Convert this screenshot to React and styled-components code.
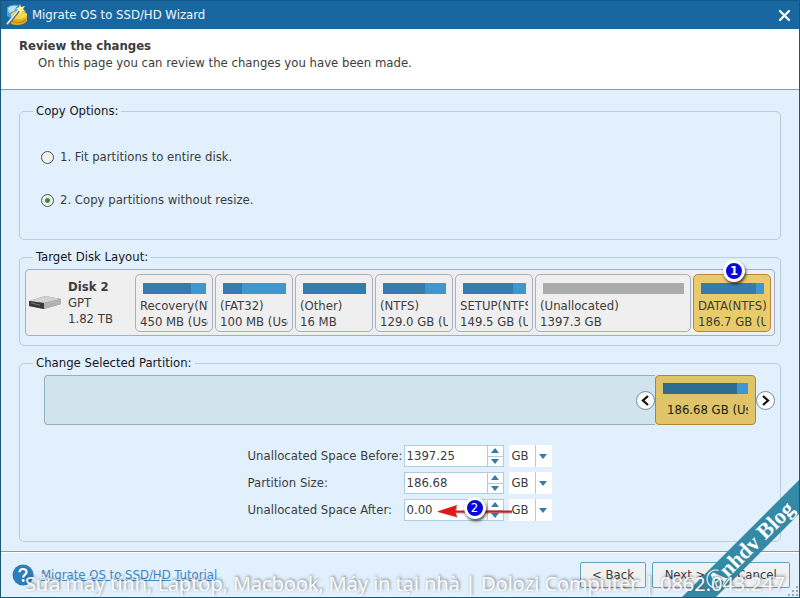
import { useState } from "react";
import styled, { createGlobalStyle } from "styled-components";

const GlobalStyle = createGlobalStyle`
  * {
    box-sizing: border-box;
  }

  body {
    margin: 0;
    background: #e2f0fd;
    color: #3c3c3c;
    font-family: Tahoma, "DejaVu Sans Condensed", "Noto Sans", sans-serif;
    font-size: 13px;
    line-height: 16px;
  }

  button, input, select {
    font: inherit;
    color: inherit;
    margin: 0;
  }
`;

const Window = styled.div`
  position: relative;
  display: flex;
  flex-direction: column;
  min-height: 100vh;
  border: 1px solid #1b5678;
  border-top-color: #135787;
  overflow: hidden;
`;

const TitleBar = styled.div`
  display: flex;
  align-items: center;
  gap: 4px;
  height: 28px;
  padding: 0 8px 0 5px;
  background: #1967a0;
  color: #f2f8fc;
`;

const TitleText = styled.span`
  flex: 1;
`;

const CloseButton = styled.button`
  display: flex;
  padding: 0;
  border: none;
  background: none;
`;

const Header = styled.header`
  height: 61px;
  padding: 9px 18px 0;
  background: #fff;
  border-bottom: 1px solid #8a9bb2;
`;

const HeaderTitle = styled.h1`
  margin: 0;
  font-size: 13px;
  line-height: 16px;
`;

const HeaderText = styled.p`
  margin: 0;
  padding: 1px 0 0 19px;
`;

const Body = styled.main`
  flex: 1;
  display: flex;
  flex-direction: column;
  gap: 9px;
  padding: 13px 18px 9px;
`;

const Group = styled.fieldset`
  min-width: 0;
  margin: 0;
  padding: ${({ $padding }) => $padding};
  border: 1px solid #b9cddb;
  border-radius: 5px;
`;

const Legend = styled.legend`
  margin-left: 8px;
  padding: 0 3px;
  color: #141422;
`;

const Options = styled.div`
  display: flex;
  flex-direction: column;
  align-items: flex-start;
  gap: 23px;
  padding: 28px 16px 29px;
`;

const Option = styled.label`
  display: flex;
  align-items: center;
  gap: 6px;
  height: 20px;
`;

const Radio = styled.input`
  appearance: none;
  width: 13px;
  height: 13px;
  border: 1px solid #4b5358;
  border-radius: 50%;
  background: #f1f1ec;

  &:checked {
    background: radial-gradient(circle, #2f9433 0 2px, #f1f1ec 3px);
  }
`;

const DiskPanel = styled.div`
  display: flex;
  align-items: center;
  height: 67px;
  padding: 0 3px;
  border: 1px solid #9fafc8;
  border-radius: 4px;
  background: #efefef;
`;

const DiskInfo = styled.div`
  display: flex;
  align-items: center;
  gap: 6px;
  width: 106px;
`;

const DiskText = styled.div`
  display: flex;
  flex-direction: column;
`;

const Partitions = styled.div`
  flex: 1;
  min-width: 0;
  display: grid;
  grid-template-columns: repeat(5, 1fr) 2fr 1fr;
  gap: 2px;
`;

const PartitionBox = styled.button`
  position: relative;
  min-width: 0;
  height: 58px;
  padding: 7px 4px 0;
  border: 1px solid ${({ $selected }) => ($selected ? "#b7863a" : "#a3b0c6")};
  border-radius: 5px;
  background: ${({ $selected }) => ($selected ? "#eacb6c" : "#efefef")};
  text-align: left;
`;

const UsageBar = styled.span`
  display: block;
  height: 11px;
  margin: ${({ $margin }) => $margin};
  background: ${({ $free }) => ($free ? "#ababab" : "#3d97d1")};
`;

const Used = styled.span`
  display: block;
  height: 100%;
  background: ${({ $dark }) => ($dark ? "#2c6c93" : "#347cab")};
`;

const PartitionText = styled.span`
  display: block;
  overflow: hidden;
  white-space: nowrap;
`;

const Badge = styled.span`
  position: absolute;
  top: ${({ $top }) => $top};
  left: ${({ $left }) => $left};
  display: flex;
  align-items: center;
  justify-content: center;
  width: 22px;
  height: 22px;
  border: 3px solid #fff;
  border-radius: 50%;
  background: #0808d8;
  box-shadow: 1px 2px 3px rgba(0, 0, 0, 0.7);
  color: #fff;
  font-size: 13px;
  font-weight: ${({ $bold }) => ($bold ? 700 : 400)};
`;

const Resizer = styled.div`
  display: flex;
  align-items: center;
  margin-left: 19px;
`;

const Track = styled.div`
  flex: 1;
  display: flex;
  align-items: center;
  justify-content: flex-end;
  height: 50px;
  border: 1px solid #98aebc;
  border-right: none;
  border-radius: 4px 0 0 4px;
  background: #d1e4ee;
`;

const ResizeBox = styled.div`
  width: 101px;
  height: 50px;
  padding: 7px;
  border: 1px solid #b58432;
  border-radius: 4px;
  background: #dfc469;
  color: #1e1a10;
`;

const SizeText = styled.span`
  display: block;
  margin-top: 8px;
  padding-left: 4px;
  overflow: hidden;
  white-space: nowrap;
`;

const ArrowButton = styled.button`
  display: flex;
  align-items: center;
  justify-content: center;
  width: 19px;
  height: 19px;
  padding: 0;
  border: 1px solid #6890b0;
  border-radius: 50%;
  background: #fff;
`;

const Form = styled.div`
  display: flex;
  flex-direction: column;
  align-items: center;
  gap: 5px;
  padding: 20px 0;
`;

const FormRow = styled.div`
  position: relative;
  display: grid;
  grid-template-columns: 156px 149px;
  align-items: center;
  height: 22px;
  white-space: nowrap;
`;

const Fields = styled.div`
  display: flex;
  gap: 5px;
`;

const Spin = styled.div`
  display: flex;
  width: 100px;
  height: 22px;
  border: 1px solid #abcfdf;
  background: #fff;
`;

const SpinInput = styled.input`
  flex: 1;
  min-width: 0;
  padding: 0 2px;
  border: none;
  outline: none;
  background: none;
`;

const SpinButtons = styled.div`
  display: flex;
  flex-direction: column;
  width: 16px;
  border-left: 1px solid #abcfdf;
`;

const SpinButton = styled.button`
  flex: 1;
  display: flex;
  align-items: center;
  justify-content: center;
  padding: 0;
  border: none;
  background: none;

  & + & {
    border-top: 1px solid #abcfdf;
  }
`;

const Unit = styled.div`
  display: grid;
  grid-template-columns: 26px 17px;
  align-items: center;
  height: 22px;
  background: #fff;

  svg {
    grid-area: 1 / 2;
    justify-self: center;
    pointer-events: none;
  }
`;

const UnitSelect = styled.select`
  appearance: none;
  grid-area: 1 / 1 / 2 / 3;
  height: 22px;
  padding: 0 0 0 3px;
  border: none;
  border-radius: 0;
  outline: none;
  background: linear-gradient(#abcfdf, #abcfdf) 26px 0 / 1px 100% no-repeat;
`;

const Annotation = styled.div`
  position: absolute;
  top: 0;
  left: 188px;
  pointer-events: none;
`;

const Footer = styled.footer`
  display: flex;
  align-items: center;
  gap: 6px;
  height: 46px;
  padding: 0 9px 0 11px;
  border-top: 1px solid #8899a6;
  box-shadow: inset 0 1px #fff;
`;

const Help = styled.div`
  flex: 1;
  display: flex;
  align-items: center;
  gap: 7px;
`;

const HelpLink = styled.a`
  color: #3f85c2;
`;

const FooterButton = styled.button`
  width: 66px;
  height: 26px;
  padding: 0;
  border: 1px solid #5fa3bd;
  border-radius: 2px;
  background: #eff1f3;
`;

const Grip = styled.svg`
  position: absolute;
  right: 1px;
  bottom: 1px;
`;

const RibbonCorner = styled.div`
  position: absolute;
  right: -1px;
  bottom: -1px;
  width: 120px;
  height: 120px;
  overflow: hidden;
  pointer-events: none;
`;

const Ribbon = styled.div`
  position: absolute;
  top: 57px;
  left: -31px;
  display: flex;
  align-items: center;
  justify-content: center;
  width: 200px;
  height: 24px;
  padding-left: 6px;
  background: #3489a6;
  color: #fff;
  font: bold 22px/22px "Liberation Serif", serif;
  transform: rotate(-45deg);

  svg {
    position: absolute;
    left: 43px;
  }
`;

const Watermark = styled.div`
  position: absolute;
  left: 24px;
  bottom: 0;
  color: #fff;
  font: 20px/26px "Open Sans", "Noto Sans", sans-serif;
  text-shadow: 1px -1px 3px rgba(60, 70, 80, 0.7);
  white-space: nowrap;
  pointer-events: none;
`;

const partitions = [
  { name: "Recovery(NTFS)", size: "450 MB (Used: 344 MB)", used: 76 },
  { name: "(FAT32)", size: "100 MB (Used: 30 MB)", used: 30 },
  { name: "(Other)", size: "16 MB", used: 100 },
  { name: "(NTFS)", size: "129.0 GB (Used: 86 GB)", used: 67 },
  { name: "SETUP(NTFS)", size: "149.5 GB (Used: 118 GB)", used: 79 },
  { name: "(Unallocated)", size: "1397.3 GB", free: true },
  { name: "DATA(NTFS)", size: "186.7 GB (Used: 163 GB)", used: 87, selected: true },
];

const AppIcon = () => (
  <svg width="22" height="22" viewBox="0 0 22 22">
    <path d="M1 3Q6 0 13 1L10 9 5 14 1 12Z" fill="#4aa5dc" />
    <path d="M2 4Q6 1 11 2L8 7 3 9Z" fill="#b9e4f7" />
    <path d="M5 13Q5 7 12 7T21 10V17Q18 21 11 21T5 18Z" fill="#e5ad1f" />
    <ellipse cx="13" cy="11" rx="8" ry="4" fill="#f5d84f" />
    <path d="M6 17Q12 21 20 16" fill="none" stroke="#b97c12" />
    <path d="M1 21 14 5" stroke="#5f6c72" strokeWidth="3" />
    <path d="M1 20 14 4" stroke="#f1f3ef" strokeWidth="1.5" />
    <path d="m14 0 1 3 4-1-2 3 3 3-4-1-2 3-1-4-3-1 3-2Z" fill="#fff08a" />
  </svg>
);

const DiskIcon = () => (
  <svg width="33" height="15" viewBox="0 0 33 15">
    <path d="M0 6 16 1 32 4V9L15 14 0 11Z" fill="#777" />
    <path d="M0 6 16 1 32 4 15 8Z" fill="#d1d1d1" />
    <path d="M15 8 32 4V9L15 14Z" fill="#b2b2b2" />
    <path d="M0 6 15 8V14L0 11Z" fill="#383838" />
    <path d="m2 8 9 2" stroke="#777" />
  </svg>
);

const Triangle = ({ up }) => (
  <svg width="8" height="5" viewBox="0 0 8 5">
    <path d={up ? "M0 5 4 0 8 5Z" : "M0 0 4 5 8 0Z"} fill="#347ca5" />
  </svg>
);

const Chevron = ({ right }) => (
  <svg width="11" height="11" viewBox="0 0 11 11">
    <path
      d={right ? "m3 1 5 4.500-5 4.500" : "M8 1 3 5.500 8 10"}
      fill="none"
      stroke="#111"
      strokeWidth="2.300"
    />
  </svg>
);

const Partition = ({ partition }) => (
  <PartitionBox $selected={partition.selected}>
    <UsageBar $margin="0 2px 4px 3px" $free={partition.free}>
      {!partition.free && <Used style={{ width: `${partition.used}%` }} />}
    </UsageBar>
    <PartitionText>{partition.name}</PartitionText>
    <PartitionText>{partition.size}</PartitionText>
    {partition.selected && (
      <Badge $top="-15px" $left="29px" $bold>
        1
      </Badge>
    )}
  </PartitionBox>
);

const SizeField = ({ id, label, value, children }) => (
  <FormRow>
    <label htmlFor={id}>{label}</label>
    <Fields>
      <Spin>
        <SpinInput id={id} type="text" defaultValue={value} />
        <SpinButtons>
          <SpinButton aria-label="Increase">
            <Triangle up />
          </SpinButton>
          <SpinButton aria-label="Decrease">
            <Triangle />
          </SpinButton>
        </SpinButtons>
      </Spin>
      <Unit>
        <UnitSelect aria-label={`${label} unit`} defaultValue="GB">
          <option>MB</option>
          <option>GB</option>
          <option>TB</option>
        </UnitSelect>
        <Triangle />
      </Unit>
    </Fields>
    {children}
  </FormRow>
);

export default function App() {
  const [option, setOption] = useState("copy");

  return (
    <>
      <GlobalStyle />
      <Window>
        <TitleBar>
          <AppIcon />
          <TitleText>Migrate OS to SSD/HD Wizard</TitleText>
          <CloseButton aria-label="Close">
            <svg width="13" height="13" viewBox="0 0 13 13">
              <path d="m2 2 9 9M11 2l-9 9" stroke="#fff" strokeWidth="2.300" strokeLinecap="round" />
            </svg>
          </CloseButton>
        </TitleBar>

        <Header>
          <HeaderTitle>Review the changes</HeaderTitle>
          <HeaderText>On this page you can review the changes you have been made.</HeaderText>
        </Header>

        <Body>
          <Group $padding="0 5px">
            <Legend>Copy Options:</Legend>
            <Options>
              <Option>
                <Radio
                  type="radio"
                  name="copy"
                  checked={option === "fit"}
                  onChange={() => setOption("fit")}
                />
                1. Fit partitions to entire disk.
              </Option>
              <Option>
                <Radio
                  type="radio"
                  name="copy"
                  checked={option === "copy"}
                  onChange={() => setOption("copy")}
                />
                2. Copy partitions without resize.
              </Option>
            </Options>
          </Group>

          <Group $padding="4px 5px 9px">
            <Legend>Target Disk Layout:</Legend>
            <DiskPanel>
              <DiskInfo>
                <DiskIcon />
                <DiskText>
                  <strong>Disk 2</strong>
                  <span>GPT</span>
                  <span>1.82 TB</span>
                </DiskText>
              </DiskInfo>
              <Partitions>
                {partitions.map((partition) => (
                  <Partition key={partition.name} partition={partition} />
                ))}
              </Partitions>
            </DiskPanel>
          </Group>

          <Group $padding="4px 5px 0">
            <Legend>Change Selected Partition:</Legend>
            <Resizer>
              <Track>
                <ArrowButton aria-label="Move left">
                  <Chevron />
                </ArrowButton>
              </Track>
              <ResizeBox>
                <UsageBar $margin="0">
                  <Used $dark style={{ width: "87%" }} />
                </UsageBar>
                <SizeText>186.68 GB (Used: 163 GB)</SizeText>
              </ResizeBox>
              <ArrowButton aria-label="Move right">
                <Chevron right />
              </ArrowButton>
            </Resizer>
            <Form>
              <SizeField id="before" label="Unallocated Space Before:" value="1397.25" />
              <SizeField id="size" label="Partition Size:" value="186.68" />
              <SizeField id="after" label="Unallocated Space After:" value="0.00">
                <Annotation>
                  <svg width="78" height="24" viewBox="0 0 78 24">
                    <path d="M18 13.500H76" stroke="#50505088" strokeWidth="2" />
                    <path d="M2 13.500 22 8 20 13.500 22 19Z" fill="#50505066" />
                    <path d="M18 12.500H76" stroke="#e01818" strokeWidth="2" />
                    <path d="M1 12.500 21 6 19 12.500 21 18Z" fill="#e01818" />
                  </svg>
                  <Badge $top="-2px" $left="28px">
                    2
                  </Badge>
                </Annotation>
              </SizeField>
            </Form>
          </Group>
        </Body>

        <Footer>
          <Help>
            <svg width="22" height="22" viewBox="0 0 22 22">
              <circle cx="11" cy="11" r="10.500" fill="#2d7dbb" />
              <path
                d="M7.500 8.200C7.800 3.800 15 4 14.500 8.300 14.300 10.700 11.200 10.600 11.200 13.500"
                fill="none"
                stroke="#fff"
                strokeWidth="2.200"
              />
              <circle cx="11.200" cy="16.500" r="1.400" fill="#fff" />
            </svg>
            <HelpLink href="#tutorial">Migrate OS to SSD/HD Tutorial</HelpLink>
          </Help>
          <FooterButton>&lt; Back</FooterButton>
          <FooterButton>Next &gt;</FooterButton>
          <FooterButton>Cancel</FooterButton>
        </Footer>

        <Grip width="10" height="10" viewBox="0 0 10 10">
          <path
            d="M8 0h2v2H8zM8 4h2v2H8zM4 4h2v2H4zM8 8h2v2H8zM4 8h2v2H4zM0 8h2v2H0z"
            fill="#9aa9b5"
          />
        </Grip>
        <RibbonCorner>
          <Ribbon>
            <svg width="22" height="22" viewBox="0 0 22 22">
              <path d="M18 16A9 9 0 1 1 19 6" fill="none" stroke="#fff" />
            </svg>
            Anhdv Blog
          </Ribbon>
        </RibbonCorner>
        <Watermark>
          Sửa máy tính, Laptop, Macbook, Máy in tại nhà | Dolozi Computer | 0862.043.247
        </Watermark>
      </Window>
    </>
  );
}
